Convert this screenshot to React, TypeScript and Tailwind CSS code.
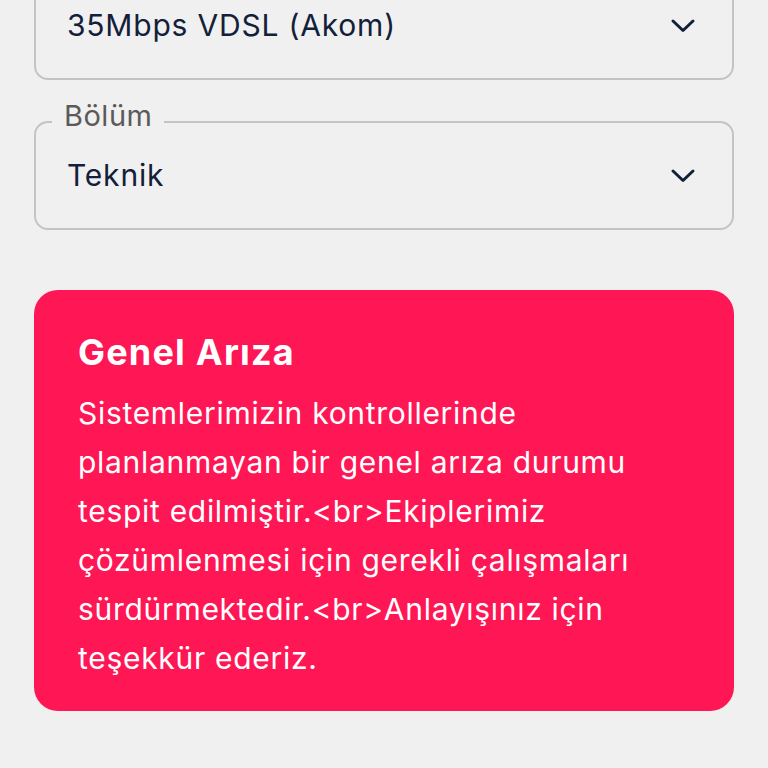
import React from "react";

function Chevron() {
  return (
    <svg width="26" height="16" viewBox="0 0 26 16" fill="none">
      <path d="M3 3 L13 12.5 L23 3" stroke="#13203a" strokeWidth="3" strokeLinecap="round" strokeLinejoin="round" />
    </svg>
  );
}

function Field({ label, value, className = "" }: { label?: string; value: string; className?: string }) {
  return (
    <div className={"relative h-[109px] rounded-[14px] border-2 border-[#c4c4c4] flex items-center justify-between pl-[31px] pr-[36px] " + className}>
      {label && (
        <span className="absolute left-[16px] top-[-25px] bg-[#f0f0f0] px-[12px] text-[29px] leading-[36px] tracking-[0.5px] text-[#5a5a5a]">
          {label}
        </span>
      )}
      <span className="text-[30px] text-[#13203a] tracking-[0.8px]">{value}</span>
      <Chevron />
    </div>
  );
}

export default function App() {
  return (
    <div className="w-[768px] h-[768px] overflow-hidden bg-[#f0f0f0] px-[34px]" style={{ fontFamily: "Inter, 'Noto Sans', sans-serif" }}>
      <div className="-mt-[29px] flex flex-col">
        <Field value="35Mbps VDSL (Akom)" />
        <Field label="Bölüm" value="Teknik" className="mt-[41px]" />
        <div className="mt-[60px] rounded-[24px] bg-[#ff1654] px-[44px] pt-[40px] pb-[28px] text-white">
          <h2 className="text-[36px] font-bold leading-[44px] tracking-[1.2px]">Genel Arıza</h2>
          <p className="mt-[15px] text-[30px] leading-[49px] tracking-[0.7px]">
            Sistemlerimizin kontrollerinde planlanmayan bir genel arıza durumu tespit edilmiştir.&lt;br&gt;Ekiplerimiz çözümlenmesi için gerekli çalışmaları sürdürmektedir.&lt;br&gt;Anlayışınız için teşekkür ederiz.
          </p>
        </div>
      </div>
    </div>
  );
}
